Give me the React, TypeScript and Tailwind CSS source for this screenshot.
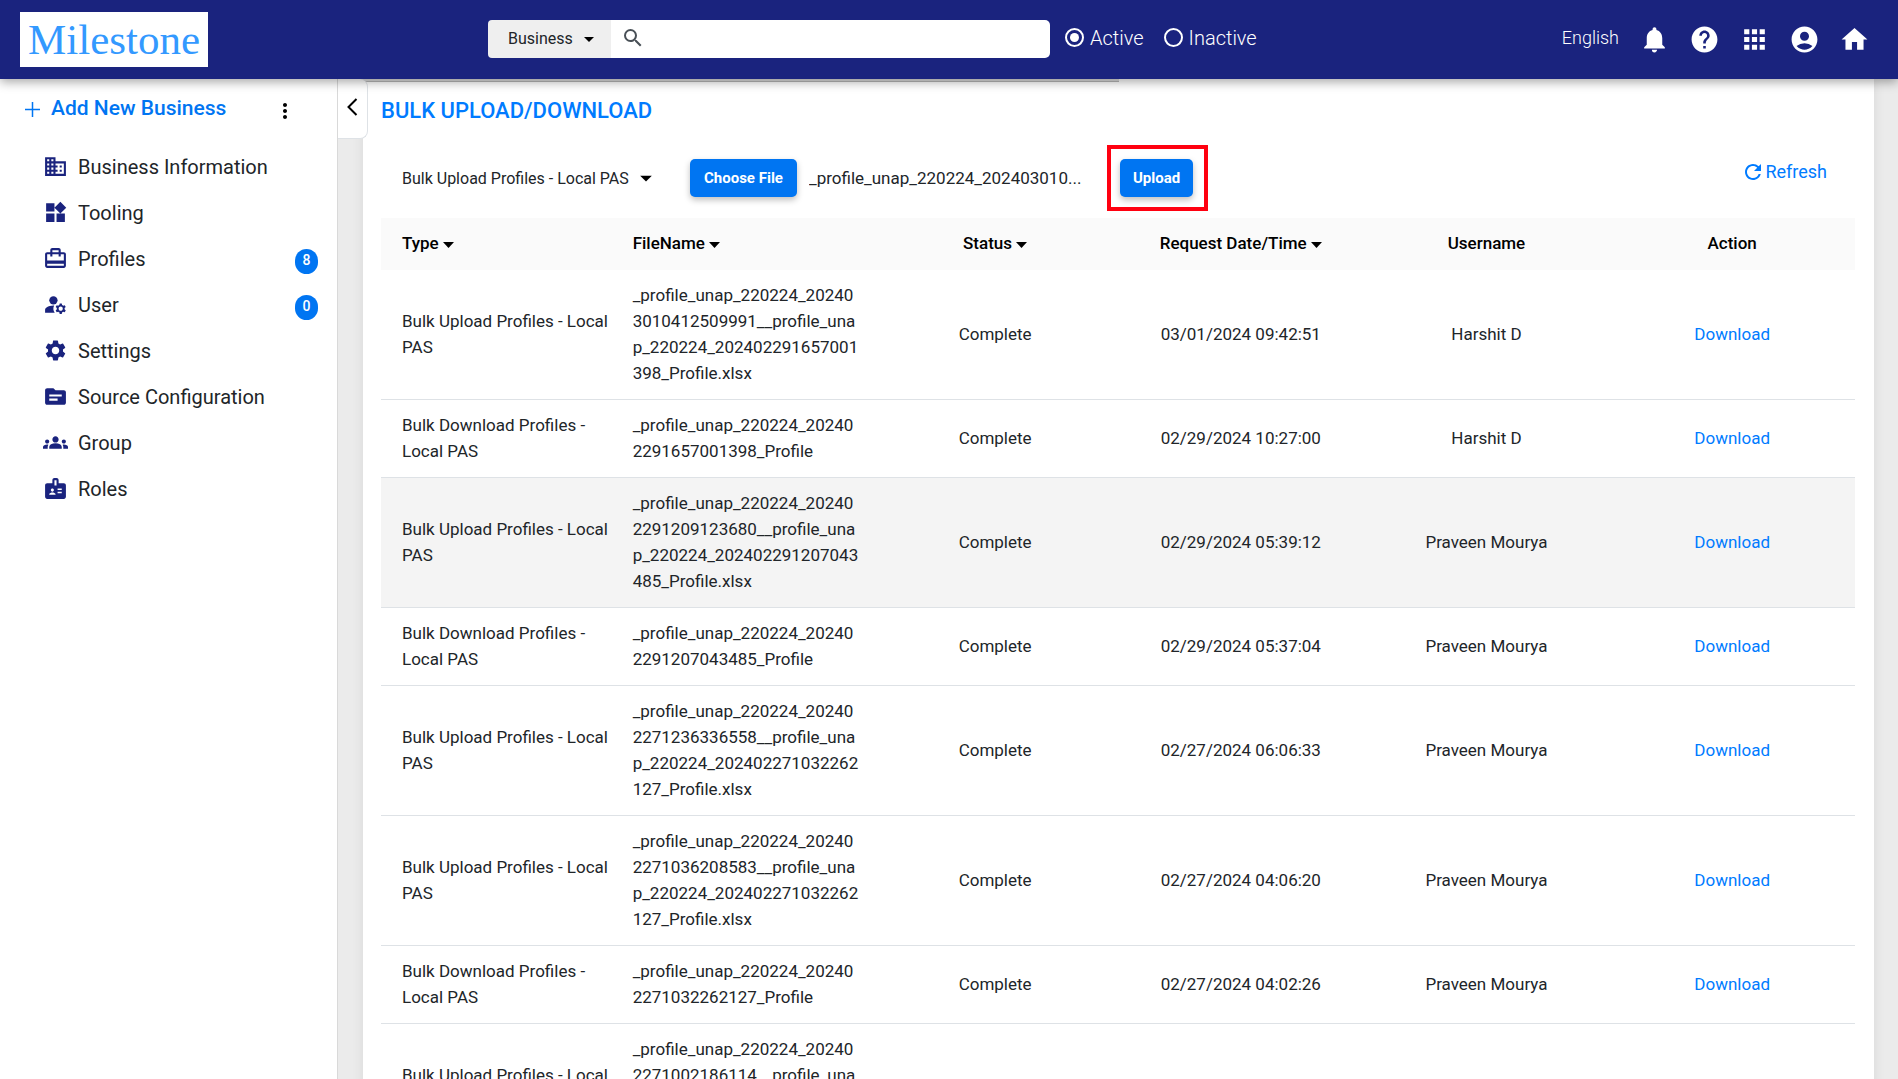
import { useState } from "react";
import {
  MdAccountCircle,
  MdApps,
  MdArrowDropDown,
  MdBadge,
  MdCardTravel,
  MdDomain,
  MdGroups,
  MdHelp,
  MdHome,
  MdManageAccounts,
  MdMoreVert,
  MdNotifications,
  MdRefresh,
  MdSearch,
  MdSettings,
  MdSource,
  MdWidgets,
} from "react-icons/md";

interface UploadRow {
  type: string;
  fileName: string;
  date: string;
  username: string;
}

const UPLOAD = "Bulk Upload Profiles - Local PAS";
const DOWNLOAD = "Bulk Download Profiles - Local PAS";

const rows: UploadRow[] = [
  { type: UPLOAD, fileName: "_profile_unap_220224_202403010412509991__profile_unap_220224_202402291657001398_Profile.xlsx", date: "03/01/2024 09:42:51", username: "Harshit D" },
  { type: DOWNLOAD, fileName: "_profile_unap_220224_202402291657001398_Profile", date: "02/29/2024 10:27:00", username: "Harshit D" },
  { type: UPLOAD, fileName: "_profile_unap_220224_202402291209123680__profile_unap_220224_202402291207043485_Profile.xlsx", date: "02/29/2024 05:39:12", username: "Praveen Mourya" },
  { type: DOWNLOAD, fileName: "_profile_unap_220224_202402291207043485_Profile", date: "02/29/2024 05:37:04", username: "Praveen Mourya" },
  { type: UPLOAD, fileName: "_profile_unap_220224_202402271236336558__profile_unap_220224_202402271032262127_Profile.xlsx", date: "02/27/2024 06:06:33", username: "Praveen Mourya" },
  { type: UPLOAD, fileName: "_profile_unap_220224_202402271036208583__profile_unap_220224_202402271032262127_Profile.xlsx", date: "02/27/2024 04:06:20", username: "Praveen Mourya" },
  { type: DOWNLOAD, fileName: "_profile_unap_220224_202402271032262127_Profile", date: "02/27/2024 04:02:26", username: "Praveen Mourya" },
  { type: UPLOAD, fileName: "_profile_unap_220224_202402271002186114__profile_unap_220224_202402271032262127_Profile.xlsx", date: "02/27/2024 03:35:10", username: "Praveen Mourya" },
];

const menu = [
  { label: "Business Information", icon: MdDomain },
  { label: "Tooling", icon: MdWidgets },
  { label: "Profiles", icon: MdCardTravel, count: 8 },
  { label: "User", icon: MdManageAccounts, count: 0 },
  { label: "Settings", icon: MdSettings },
  { label: "Source Configuration", icon: MdSource },
  { label: "Group", icon: MdGroups },
  { label: "Roles", icon: MdBadge },
];

const headerIcons = [
  { label: "Notifications", icon: MdNotifications },
  { label: "Help", icon: MdHelp },
  { label: "Apps", icon: MdApps },
  { label: "Account", icon: MdAccountCircle },
  { label: "Home", icon: MdHome },
];

const columns = [
  { label: "Type", sortable: true, className: "pl-[21px] text-left" },
  { label: "FileName", sortable: true, className: "pl-1.5 text-left" },
  { label: "Status", sortable: true, className: "text-center" },
  { label: "Request Date/Time", sortable: true, className: "text-center" },
  { label: "Username", sortable: false, className: "text-center" },
  { label: "Action", sortable: false, className: "text-center" },
];

function Caret() {
  return (
    <svg width="11" height="6" viewBox="0 0 11 6" className="inline-block align-middle">
      <path d="M0 0h11L5.500 6z" fill="currentColor" />
    </svg>
  );
}

function Header() {
  const [state, setState] = useState("active");

  return (
    <header className="relative z-20 flex h-[79px] shrink-0 items-center bg-[#1a237e] pr-[19px] pl-5 text-white shadow-[0_3px_10px_rgba(0,0,0,0.35)]">
      <a href="#" className="flex h-[55px] w-[188px] items-center justify-center bg-white font-['Liberation_Serif',serif] text-[43px] leading-none text-[#3399ff]">
        Milestone
      </a>

      {/* Search */}
      <div className="mb-0.5 ml-[280px] flex h-[38px] flex-1 items-center">
        <div className="relative h-full w-[123px] shrink-0">
          <select aria-label="Search in" className="h-full w-full appearance-none rounded-l bg-[#efefef] pl-5 text-base text-[#212529]">
            <option>Business</option>
            <option>Profile</option>
          </select>
          <MdArrowDropDown size={24} className="pointer-events-none absolute top-[7px] right-2.5 text-black" />
        </div>
        <div className="relative h-full w-[439px]">
          <MdSearch size={24} className="pointer-events-none absolute top-1.5 left-2.5 text-[#495057]" />
          <input type="text" aria-label="Search" className="h-full w-full rounded-r-[5px] bg-white pl-10 text-base text-[#212529]" />
        </div>
        <div className="mb-0.5 ml-[15px] flex items-center gap-5 text-[20px] font-light">
          {["Active", "Inactive"].map((label) => (
            <label key={label} className="flex items-center gap-1.5">
              <input
                type="radio"
                name="state"
                checked={state === label.toLowerCase()}
                onChange={() => setState(label.toLowerCase())}
                className="size-[19px] appearance-none rounded-full border-2 border-white bg-clip-content p-[3px] checked:bg-white"
              />
              {label}
            </label>
          ))}
        </div>
      </div>

      <button type="button" className="mr-2.5 mb-1 text-lg font-light">English</button>
      {headerIcons.map(({ label, icon: Icon }) => (
        <button key={label} type="button" aria-label={label} className="flex w-[50px] justify-center">
          <Icon size={31} />
        </button>
      ))}
    </header>
  );
}

function Sidebar() {
  return (
    <aside className="w-[338px] shrink-0 border-r border-[#d9d9d9] bg-white">
      <div className="flex h-[60px] items-center justify-between pr-10 pl-[25px]">
        <button type="button" className="flex items-center gap-[11px] text-[21px] font-medium text-[#0075f2]">
          <svg width="15" height="15" viewBox="0 0 15 15" stroke="currentColor" strokeWidth="1.5">
            <path d="M7.500 0v15M0 7.500h15" />
          </svg>
          Add New Business
        </button>
        <button type="button" aria-label="More options" className="mt-1 text-black">
          <MdMoreVert size={24} />
        </button>
      </div>

      <nav className="mt-[5px]">
        <ul>
          {menu.map(({ label, icon: Icon, count }) => (
            <li key={label}>
              <a href="#" className="flex h-[46px] items-center pr-[19px] pl-[43px] text-[20px] text-[#212529]">
                <Icon size={25} className="mr-2.5 mb-0.5 text-[#1a237e]" />
                {label}
                {count !== undefined && (
                  <span className="mt-1 ml-auto flex h-[25px] w-[23px] items-center justify-center rounded-full bg-[#0075f2] pb-0.5 text-sm font-medium text-white">
                    {count}
                  </span>
                )}
              </a>
            </li>
          ))}
        </ul>
      </nav>
    </aside>
  );
}

export default function App() {
  const [bulkType, setBulkType] = useState(UPLOAD);

  return (
    <div className="flex h-screen flex-col overflow-hidden bg-[#ebebeb] font-['Roboto',sans-serif]">
      <Header />

      <div className="flex min-h-0 flex-1">
        <Sidebar />

        <div className="relative min-w-0 flex-1 pr-6 pl-[25px]">
          <button
            type="button"
            aria-label="Collapse menu"
            className="absolute top-0 left-0 z-10 flex h-[60px] w-[30px] items-center justify-center rounded-r-lg border-r border-b border-[#dee2e6] bg-white pb-1 text-black"
          >
            <svg width="11" height="18" viewBox="0 0 11 18" fill="none" stroke="currentColor" strokeWidth="2">
              <path d="M9.500 1L1.500 9l8 8" />
            </svg>
          </button>

          <main className="min-h-full bg-white shadow-[0_0_12px_rgba(0,0,0,0.08)]">
            <div className="h-[3px] w-1/2 border-b border-[#b8b8b8] bg-[#e0e0e0]" />

            <div className="pr-[19px] pl-[18px]">
              <h1 className="pt-[15px] text-[22px] leading-7 font-medium text-[#007bff]">BULK UPLOAD/DOWNLOAD</h1>

              {/* Toolbar */}
              <div className="mt-5 mb-[7px] flex h-[66px] items-center pl-[21px]">
                <div className="relative">
                  <select
                    aria-label="Bulk type"
                    value={bulkType}
                    onChange={(e) => setBulkType(e.target.value)}
                    className="w-[252px] appearance-none bg-transparent pt-0.5 text-base text-[#212529]"
                  >
                    <option>{UPLOAD}</option>
                    <option>{DOWNLOAD}</option>
                  </select>
                  <MdArrowDropDown size={28} className="pointer-events-none absolute -top-px -right-1.5 text-black" />
                </div>
                <button type="button" className="ml-9 h-[38px] w-[107px] rounded-[5px] bg-[#0075f2] text-[15px] font-bold text-white shadow-[0_3px_6px_rgba(0,0,0,0.25)]">
                  Choose File
                </button>
                <span className="ml-3 w-[280px] truncate pt-0.5 text-[17px] text-[#212529]">
                  _profile_unap_220224_202403010...
                </span>
                <div className="ml-[18px] border-4 border-[#ff0010] py-[10px] pr-[11px] pl-[9px]">
                  <button type="button" className="h-[38px] w-[73px] rounded-[5px] bg-[#0075f2] text-[15px] font-bold text-white shadow-[0_3px_6px_rgba(0,0,0,0.25)]">
                    Upload
                  </button>
                </div>
                <button type="button" className="mr-7 mb-3 ml-auto flex items-center text-lg text-[#007bff]">
                  <MdRefresh size={24} />
                  Refresh
                </button>
              </div>

              {/* Table */}
              <table className="w-full table-fixed text-[17px] leading-[26px]">
                <thead>
                  <tr className="bg-[#fafafa] text-black">
                    {columns.map((col) => (
                      <th key={col.label} className={`pt-3 pb-[14px] font-medium ${col.className}`}>
                        {col.label} {col.sortable && <Caret />}
                      </th>
                    ))}
                  </tr>
                </thead>
                <tbody>
                  {rows.map((row, i) => (
                    <tr key={i} className={`border-b border-[#dee2e6] text-[#212529] ${i === 2 ? "bg-[#f4f4f4]" : ""}`}>
                      <td className="pt-3 pr-1.5 pb-[13px] pl-[21px]">{row.type}</td>
                      <td className="pt-3 pr-3 pb-[13px] pl-1.5 break-all">{row.fileName}</td>
                      <td className="pb-0.5 text-center">Complete</td>
                      <td className="pb-0.5 text-center">{row.date}</td>
                      <td className="pb-0.5 text-center">{row.username}</td>
                      <td className="pb-0.5 text-center">
                        <a href="#" className="text-[#007bff]">Download</a>
                      </td>
                    </tr>
                  ))}
                </tbody>
              </table>
            </div>
          </main>
        </div>
      </div>
    </div>
  );
}
